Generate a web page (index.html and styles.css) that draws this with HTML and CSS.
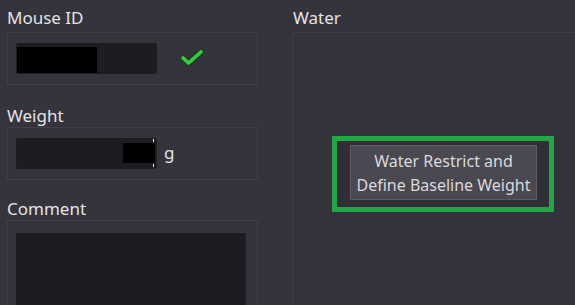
FILE: index.html
```
<!DOCTYPE html>
<html>
	<head>
		<title>Mouse</title>
		<meta charset="UTF-8">
		<link rel="stylesheet" href="styles.css">
	</head>
	<body>
		<div class="main-content">
			<div class="left-col">
				<div class="group">
					<label>Mouse ID</label>
					<div class="frame">
						<div class="field">
							<span class="redact id-redact"></span>
						</div>
						<svg class="check" width="24" height="19" viewBox="0 0 24 19">
							<polyline points="3,10 8.5,15 21,4" fill="none" stroke="#243a28" stroke-width="7" stroke-linecap="round" stroke-linejoin="round"/>
							<polyline points="3,10 8.5,15 21,4" fill="none" stroke="#2fd13d" stroke-width="3.6" stroke-linecap="round" stroke-linejoin="round"/>
						</svg>
					</div>
				</div>
				<div class="group">
					<label>Weight</label>
					<div class="frame">
						<div class="field field-weight">
							<span class="redact weight-redact"></span>
						</div>
						<span class="unit">g</span>
					</div>
				</div>
				<div class="group">
					<label>Comment</label>
					<div class="frame frame-comment">
						<div class="comment-box"></div>
					</div>
				</div>
			</div>
			<div class="right-col">
				<label>Water</label>
				<div class="frame frame-water">
					<div class="highlight">
						<button class="btn">Water Restrict and<br>Define Baseline Weight</button>
					</div>
				</div>
			</div>
		</div>
	</body>
</html>
```

FILE: styles.css
```
body {
	margin: 0;
	background: #35333c;
	color: #e4e4e6;
	font-family: "Noto Sans", "Open Sans", sans-serif;
	overflow: hidden;
}
.main-content {
	display: flex;
	padding-left: 7px;
	gap: 34px;
}
.left-col {
	width: 251px;
	flex-shrink: 0;
	display: flex;
	flex-direction: column;
}
.group {
	margin-bottom: 10px;
}
.group:nth-child(2) {
	margin-bottom: 8px;
}
label {
	display: block;
	height: 32px;
	font-size: 17px;
	line-height: 20px;
	padding-top: 8px;
	box-sizing: border-box;
}
.group + .group label {
	padding-top: 11px;
}
.frame {
	border: 1px solid #403e48;
	height: 53px;
	box-sizing: border-box;
	display: flex;
	align-items: center;
	padding-left: 8px;
}
.field {
	width: 141px;
	height: 31px;
	background: #1d1c21;
	border-radius: 2px;
	position: relative;
}
.redact {
	position: absolute;
	background: #000;
}
.id-redact {
	left: 1px;
	top: 4px;
	width: 80px;
	height: 26px;
}
.weight-redact {
	left: 107px;
	top: 5px;
	width: 32px;
	height: 20px;
}
.weight-redact::before,
.weight-redact::after {
	content: "";
	position: absolute;
	left: 30px;
	width: 1px;
	height: 3px;
	background: #fff;
}
.weight-redact::before {
	top: -4px;
}
.weight-redact::after {
	bottom: -4px;
}
.check {
	margin-left: 23px;
	margin-top: -3px;
}
.unit {
	font-size: 17px;
	margin-left: 7px;
	margin-top: -3px;
}
.frame-comment {
	height: 90px;
	align-items: flex-start;
	padding-top: 12px;
}
.comment-box {
	width: 230px;
	height: 80px;
	background: #1d1c21;
}
.right-col {
	width: 302px;
	flex-shrink: 0;
}
.right-col label {
	padding-left: 1px;
}
.frame-water {
	height: 284px;
	padding-left: 0;
	justify-content: center;
}
.highlight {
	border: 5px solid #22a747;
	padding: 4px 12px 7px 13px;
	background: #302e37;
}
.btn {
	display: block;
	width: 187px;
	height: 55px;
	background: #4a4851;
	border: 1px solid #5d5b64;
	color: #d9d9dc;
	font-family: "Noto Sans", "Open Sans", sans-serif;
	font-size: 16px;
	line-height: 24px;
	padding: 0;
}
```
